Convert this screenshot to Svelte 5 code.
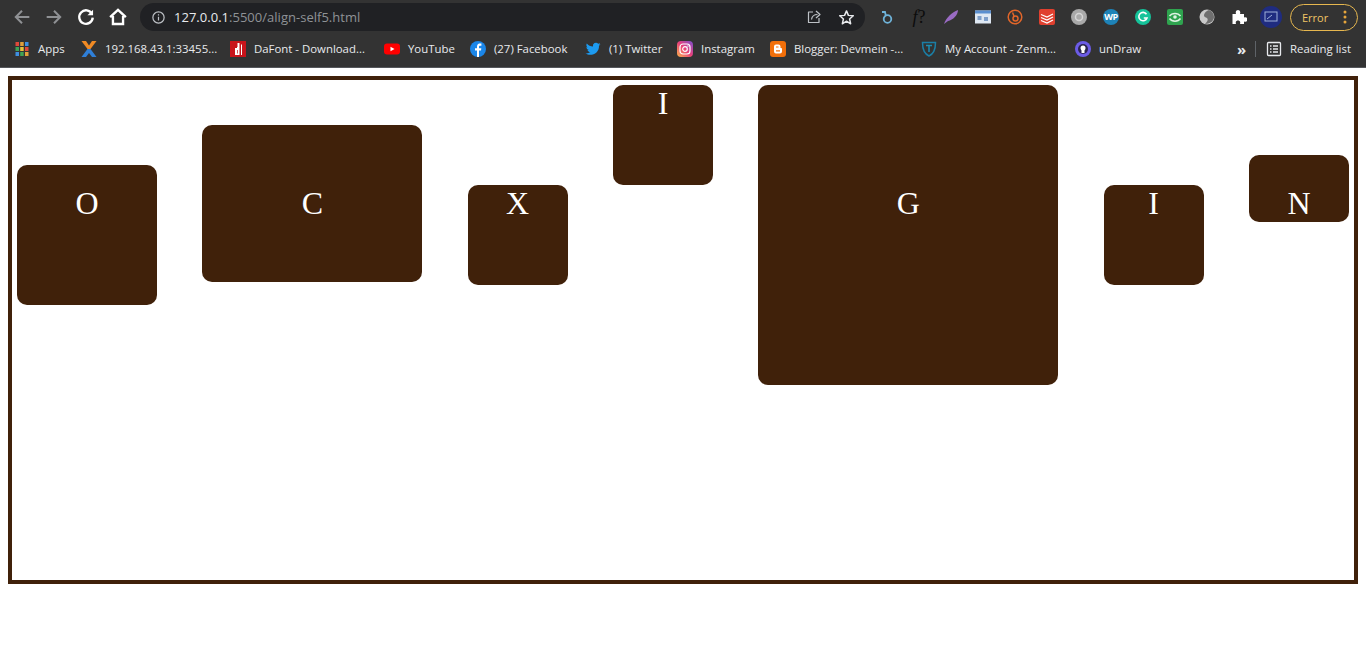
<script lang="ts">
  const items = [
    { letter: 'O', cls: 'o' },
    { letter: 'C', cls: 'c' },
    { letter: 'X', cls: 'x' },
    { letter: 'I', cls: 'top' },
    { letter: 'G', cls: 'g' },
    { letter: 'I', cls: 'x' },
    { letter: 'N', cls: 'n' },
  ];
</script>

<header class="browser">
  <div class="toolbar">
    <div class="nav">
      <svg viewBox="0 0 16 16" class="dim"><path d="M14.500 8H2.500M8 2.500 2.500 8 8 13.500" /></svg>
      <svg viewBox="0 0 16 16" class="dim"><path d="M1.500 8h12M8 2.500 13.500 8 8 13.500" /></svg>
      <svg viewBox="0 0 16 16" class="bright"><path d="M13.300 5.200A6 6 0 1 0 14 8.600" /><path d="M14.300 1.500v5H9.300z" class="fill" /></svg>
      <svg viewBox="0 0 16 16" class="bright"><path d="M1 8.200 8 1.600l7 6.600M3.500 7v7.200h9V7" /></svg>
    </div>
    <div class="omnibox">
      <svg viewBox="0 0 16 16" class="info"><circle cx="8" cy="8" r="6" /><path d="M8 7.200v4M8 4.400v1.400" /></svg>
      <span class="url"><b>127.0.0.1</b>:5500/align-self5.html</span>
      <svg viewBox="0 0 16 16" class="share"><path d="M7 3H2.500v10.500h10.500V9" /><path d="M5.500 10.500c.5-3.500 3-5 6-5M10 2l4 3.500L10 9" /></svg>
      <svg viewBox="0 0 16 16" class="star"><path d="M8 1.800 9.800 6l4.600.4-3.500 3 1 4.500L8 11.500 4.100 13.900l1-4.500-3.500-3L6.200 6z" /></svg>
    </div>
    <div class="extensions">
      <svg viewBox="0 0 16 16"><circle cx="8.500" cy="10" r="3.800" fill="none" stroke="#6fb3d9" stroke-width="1.800" /><path d="M3 3h3l.8 3.500" fill="none" stroke="#6fb3d9" stroke-width="1.800" /></svg>
      <span class="fq"><i>f</i>?</span>
      <svg viewBox="0 0 16 16"><path d="M1 15C3 9 9 3 15 1c0 5-5 10-10 11z" fill="#9a6bc4" /></svg>
      <svg viewBox="0 0 16 16"><rect x="0" y="1.500" width="16" height="13" fill="#dfe8f3" /><rect x="0" y="1.500" width="16" height="3" fill="#5b8fd0" /><rect x="2.500" y="7" width="4" height="4" fill="#7f9fca" /><rect x="9" y="8" width="4" height="4" fill="#7f9fca" /></svg>
      <svg viewBox="0 0 16 16"><circle cx="8" cy="8" r="6.800" fill="none" stroke="#e2662a" stroke-width="1.500" /><path d="M5.500 3.500 7 7" stroke="#e2662a" stroke-width="1.500" /><circle cx="8.500" cy="9.500" r="2.500" fill="none" stroke="#e2662a" stroke-width="1.500" /></svg>
      <svg viewBox="0 0 16 16"><rect width="16" height="16" rx="2" fill="#e0402f" /><path d="M2 5.500 8 8l6-3M2 8.500l6 2.500 6-3M2 11.500 8 14l6-3" fill="none" stroke="#fff" stroke-width="1.200" /></svg>
      <svg viewBox="0 0 16 16"><circle cx="8" cy="8" r="8" fill="#a9a9a9" /><circle cx="8" cy="8" r="3.500" fill="none" stroke="#d5d5d5" stroke-width="1.500" /></svg>
      <span class="wp">WP</span>
      <svg viewBox="0 0 16 16"><circle cx="8" cy="8" r="8" fill="#15c39a" /><path d="M11.500 5.200A4.200 4.200 0 1 0 12 9H8.800" fill="none" stroke="#fff" stroke-width="1.600" /></svg>
      <svg viewBox="0 0 16 16"><rect width="16" height="16" rx="2" fill="#2fa44f" /><path d="M2.500 7C5 3.500 11 3.500 13.500 7M2.500 9.500c2.500 3.500 8.500 3.500 11 0" fill="none" stroke="#dff3e3" stroke-width="1.500" /><circle cx="8" cy="8" r="1.800" fill="#dff3e3" /></svg>
      <svg viewBox="0 0 16 16"><circle cx="8" cy="8" r="7.500" fill="#c9c9c9" /><path d="M10 1c-5 2-6 6-4 7s5 2 0 7c6 0 9-4 9-7s-2-6-5-7z" fill="#6f6f6f" /></svg>
      <svg viewBox="0 0 16 16"><path d="M1.500 5H5C4 2 6 1 7 1s3 1 2 4h4v3.500c3-1 3.500 1 3.500 2s-.5 3-3.500 2V15H9c1-3-1-3.500-2-3.500S4 12 5 15H1.500z" fill="#fff" /></svg>
      <svg viewBox="0 0 22 22" class="monitor"><circle cx="11" cy="11" r="11" fill="#1f2c80" /><rect x="5" y="6" width="12" height="9" fill="none" stroke="#9fb0d8" /><path d="M7 13l5-4" stroke="#9fb0d8" /></svg>
    </div>
    <div class="error-pill">
      <span>Error</span>
      <svg viewBox="0 0 4 14"><circle cx="2" cy="2" r="1.500" /><circle cx="2" cy="7" r="1.500" /><circle cx="2" cy="12" r="1.500" /></svg>
    </div>
  </div>

  <div class="bookmarks">
    <div class="mark">
      <svg viewBox="0 0 16 16">
        <rect x="1.500" y="1" width="3.500" height="4" fill="#e0483b" /><rect x="6.200" y="1" width="3.500" height="4" fill="#e0a03b" /><rect x="11" y="1" width="3.500" height="4" fill="#3f8fe0" />
        <rect x="1.500" y="6" width="3.500" height="4" fill="#3fa354" /><rect x="6.200" y="6" width="3.500" height="4" fill="#e8c13a" /><rect x="11" y="6" width="3.500" height="4" fill="#e0483b" />
        <rect x="1.500" y="11" width="3.500" height="4" fill="#3f8fe0" /><rect x="6.200" y="11" width="3.500" height="4" fill="#3fa354" /><rect x="11" y="11" width="3.500" height="4" fill="#e0a03b" />
      </svg>
      <span>Apps</span>
    </div>
    <div class="mark">
      <svg viewBox="0 0 16 16"><path d="M.500 0H5l3 4.500L11 0h4.500L9.500 8H6.500z" fill="#f08a24" /><path d="M6.500 8 .500 16H5l3-4 3 4h4.500L9.500 8z" fill="#2f7fd8" /></svg>
      <span>192.168.43.1:33455...</span>
    </div>
    <div class="mark">
      <svg viewBox="0 0 16 16"><rect width="16" height="16" fill="#c8141b" /><path d="M9.500 2v12H5V7h2V6h.5V2zM7 9v3.500h.7V9zM11 3.500h1V14h-1z" fill="#fff" fill-rule="evenodd" /></svg>
      <span>DaFont - Download...</span>
    </div>
    <div class="mark">
      <svg viewBox="0 0 16 16"><rect y="2.500" width="16" height="11" rx="3" fill="#f00" /><path d="M6.500 5.700 10.500 8l-4 2.300z" fill="#fff" /></svg>
      <span>YouTube</span>
    </div>
    <div class="mark">
      <svg viewBox="0 0 16 16"><circle cx="8" cy="8" r="8" fill="#1b86e8" /><path d="M9 16V9.500h2l.3-2.300H9V5.800c0-.7.300-1.100 1.200-1.100h1.200V2.600C10 2.400 7 2.300 7 5.500v1.700H5v2.300h2V16z" fill="#fff" /></svg>
      <span>(27) Facebook</span>
    </div>
    <div class="mark">
      <svg viewBox="0 0 16 16"><path d="M15.500 3.200c-.5.300-1 .4-1.700.5.600-.4 1.100-.9 1.300-1.600-.6.300-1.200.6-1.900.7A3 3 0 0 0 8 5.500C5.500 5.400 3.300 4.200 1.800 2.400c-.8 1.400-.4 3.100.9 4-.5 0-1-.2-1.300-.4 0 1.500 1 2.700 2.400 3-.4.100-.9.100-1.300 0 .4 1.200 1.500 2 2.800 2.100A6.100 6.100 0 0 1 .5 12.400c5.500 3.500 14-.1 13.500-7.700.6-.4 1.100-.9 1.500-1.500z" fill="#1d9bf0" /></svg>
      <span>(1) Twitter</span>
    </div>
    <div class="mark">
      <svg viewBox="0 0 16 16">
        <defs><linearGradient id="ig" x1="0" y1="1" x2="1" y2="0"><stop offset="0" stop-color="#fdb44b" /><stop offset=".5" stop-color="#e8407a" /><stop offset="1" stop-color="#7a4fd0" /></linearGradient></defs>
        <rect width="16" height="16" rx="4" fill="url(#ig)" /><rect x="3" y="3" width="10" height="10" rx="3" fill="none" stroke="#fff" stroke-width="1.200" /><circle cx="8" cy="8" r="2.300" fill="none" stroke="#fff" stroke-width="1.200" /><circle cx="11" cy="5" r=".7" fill="#fff" />
      </svg>
      <span>Instagram</span>
    </div>
    <div class="mark">
      <svg viewBox="0 0 16 16"><rect width="16" height="16" rx="3" fill="#f26f0a" /><path d="M6 3.500h2.500A2 2 0 0 1 10.500 5.500V7h.5c.5 0 1 .4 1 1v2.500a2 2 0 0 1-2 2H6a2 2 0 0 1-2-2v-5a2 2 0 0 1 2-2z" fill="#fff" /><path d="M6 6h2.500M6 9.800h4" stroke="#f26f0a" stroke-width="1.200" /></svg>
      <span>Blogger: Devmein -...</span>
    </div>
    <div class="mark">
      <svg viewBox="0 0 16 16"><path d="M1.500 1.500h13c0 6-1 11-6.500 13.500C2.500 12.500 1.500 7.500 1.500 1.500z" fill="none" stroke="#1b7fa6" stroke-width="1.500" /><path d="M5 4.500h6M8 4.500V11" stroke="#1b8fb5" stroke-width="1.500" /></svg>
      <span>My Account - Zenm...</span>
    </div>
    <div class="mark">
      <svg viewBox="0 0 16 16"><circle cx="8" cy="8" r="8" fill="#6c5ce7" /><circle cx="8" cy="8" r="5" fill="#2b2550" /><circle cx="8" cy="7" r="2.500" fill="#fff" /><rect x="6.500" y="8.500" width="3" height="3.500" fill="#fff" /></svg>
      <span>unDraw</span>
    </div>
    <div class="more">
      <span class="chev">»</span>
      <i class="sep"></i>
      <svg viewBox="0 0 16 16"><rect x="1.500" y="1.500" width="13" height="13" rx="1" fill="none" stroke="#e8eaed" stroke-width="1.300" /><path d="M4 5h1.500M7 5h5M4 8h1.500M7 8h5M4 11h1.500M7 11h5" stroke="#e8eaed" stroke-width="1.300" /></svg>
      <span>Reading list</span>
    </div>
  </div>
</header>

<main class="page">
  <div class="container">
    {#each items as item}
      <div class="item {item.cls}">{item.letter}</div>
    {/each}
  </div>
</main>

<style>
  :global(body) {
    background: #fff;
  }

  .browser {
    height: 68px;
    box-sizing: border-box;
    background: #333333;
    border-bottom: 1px solid #55575b;
    font-family: "Open Sans", "Noto Sans", sans-serif;
    color: #e8eaed;
  }

  .toolbar {
    display: flex;
    align-items: center;
    height: 34px;
  }

  .nav {
    display: flex;
    align-items: center;
    gap: 14px;
    width: 126px;
    padding-left: 13px;
    flex: none;
    box-sizing: border-box;
  }

  .nav svg {
    width: 18px;
    height: 18px;
    fill: none;
    stroke-width: 1.800;
    flex: none;
  }

  .nav .dim {
    stroke: #8f9194;
  }

  .nav .bright {
    stroke: #fff;
    stroke-width: 2.100;
  }

  .nav .fill {
    fill: #fff;
    stroke: none;
  }

  .omnibox {
    margin-left: 14px;
    width: 725px;
    height: 28px;
    border-radius: 14px;
    background: #202124;
    display: flex;
    align-items: center;
    padding: 0 10px 0 11px;
    box-sizing: border-box;
    flex: none;
  }

  .omnibox svg {
    fill: none;
    stroke-linejoin: round;
    flex: none;
  }

  .info {
    width: 15px;
    height: 15px;
    stroke: #bdc1c6;
    stroke-width: 1.300;
  }

  .url {
    margin-left: 8px;
    flex: 1;
    font-size: 13px;
    color: #8f9296;
    letter-spacing: 0.02px;
  }

  .url b {
    font-weight: 400;
    color: #e8eaed;
  }

  .share {
    width: 16px;
    height: 16px;
    stroke: #bdc1c6;
    stroke-width: 1.200;
    margin-right: 16px;
  }

  .star {
    width: 17px;
    height: 17px;
    stroke: #e8eaed;
    stroke-width: 1.400;
  }

  .extensions {
    display: flex;
    align-items: center;
    gap: 16px;
    margin-left: 14px;
    flex: none;
  }

  .extensions > svg,
  .extensions > span {
    width: 16px;
    height: 16px;
    flex: none;
  }

  .extensions > .monitor {
    width: 22px;
    height: 22px;
    margin: 0 -3px;
  }

  .fq {
    font-family: "Liberation Serif", serif;
    font-size: 18px;
    line-height: 16px;
    color: #0c0c0c;
    white-space: nowrap;
    text-align: center;
  }

  .wp {
    border-radius: 50%;
    background: #1e83b8;
    color: #fff;
    font-size: 9px;
    font-weight: 700;
    line-height: 16px;
    text-align: center;
    letter-spacing: -0.5px;
  }

  .error-pill {
    margin-left: 11px;
    width: 68px;
    height: 27px;
    box-sizing: border-box;
    border: 1px solid #e6b74f;
    border-radius: 14px;
    display: flex;
    align-items: center;
    justify-content: space-between;
    padding: 0 10px 0 11px;
    color: #f0c565;
    font-size: 11px;
    flex: none;
  }

  .error-pill svg {
    width: 4px;
    height: 14px;
    fill: #e6a53c;
  }

  .bookmarks {
    display: grid;
    grid-template-columns: 67px 149px 154px 86px 115px 92px 93px 151px 154px 152px 1fr;
    align-items: center;
    height: 29px;
    padding-left: 14px;
    font-size: 11.400px;
  }

  .mark,
  .more {
    display: flex;
    align-items: center;
    white-space: nowrap;
  }

  .mark svg,
  .more svg {
    width: 16px;
    height: 16px;
    flex: none;
  }

  .mark span {
    margin-left: 8px;
  }

  .more {
    margin-left: 10px;
  }

  .chev {
    font-size: 15px;
    font-weight: 700;
    line-height: 16px;
    width: 11px;
  }

  .sep {
    width: 1px;
    height: 16px;
    background: #5f6368;
    margin: 0 10px 0 7px;
  }

  .more span:last-child {
    margin-left: 8px;
  }

  .page {
    padding: 8px;
  }

  .container {
    display: flex;
    justify-content: space-between;
    align-items: baseline;
    height: 500px;
    border: 4px solid #40210a;
  }

  .item {
    width: 100px;
    height: 100px;
    margin: 5px;
    background: #40210a;
    border-radius: 10px;
    color: #fff;
    font-family: "Liberation Serif", serif;
    font-size: 32px;
    text-align: center;
  }

  .o {
    padding: 20px;
  }

  .c {
    height: auto;
    padding: 60px;
  }

  .top {
    align-self: flex-start;
  }

  .g {
    padding: 100px;
  }

  .n {
    height: auto;
    padding-top: 30px;
  }
</style>
